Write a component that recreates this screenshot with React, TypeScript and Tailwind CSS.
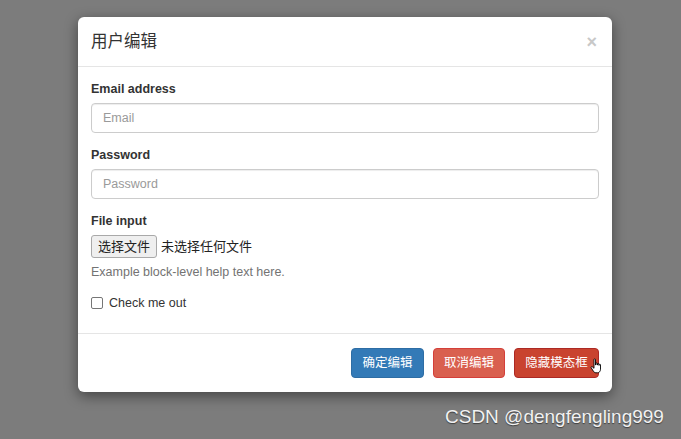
export default function App() {
  return (
    <div
      className="relative h-[439px] w-[681px] overflow-hidden bg-[#7c7c7c] pl-[78px] pt-[17px]"
      style={{ fontFamily: '"Liberation Sans", "Noto Sans CJK SC", sans-serif' }}
    >
      <div className="w-[534px] rounded-[6px] bg-white shadow-[0_4px_14px_rgba(0,0,0,0.45)]">
        {/* header */}
        <div className="flex h-[50px] items-center justify-between border-b border-[#e5e5e5] px-[13px]">
          <h4 className="text-[16.5px] text-[#333]">用户编辑</h4>
          <span className="mr-[2px] text-[18px] font-bold leading-none text-[#c8c8c8]">×</span>
        </div>

        {/* body */}
        <div className="border-b border-[#e5e5e5] px-[13px] pb-[15px] pt-[13px] text-[12.5px] text-[#333]">
          <div className="mb-[13px]">
            <label className="mb-[5px] block text-[12.5px] font-bold leading-[18px]">Email address</label>
            <input
              placeholder="Email"
              className="block h-[30px] w-full rounded-[4px] border border-[#ccc] px-[11px] text-[12.5px] placeholder:text-[#9a9a9a] shadow-[inset_0_1px_1px_rgba(0,0,0,0.075)]"
            />
          </div>
          <div className="mb-[13px]">
            <label className="mb-[5px] block text-[12.5px] font-bold leading-[18px]">Password</label>
            <input
              placeholder="Password"
              className="block h-[30px] w-full rounded-[4px] border border-[#ccc] px-[11px] text-[12.5px] placeholder:text-[#9a9a9a] shadow-[inset_0_1px_1px_rgba(0,0,0,0.075)]"
            />
          </div>
          <div className="mb-[13px]">
            <label className="mb-[5px] block text-[12.5px] font-bold leading-[18px]">File input</label>
            <div className="flex items-center gap-[4px]">
              <span className="flex h-[23px] items-center rounded-[3px] border border-[#a9a9a9] bg-[#efefef] px-[6px] text-[13px] text-[#222]">
                选择文件
              </span>
              <span className="text-[13px] text-[#222]">未选择任何文件</span>
            </div>
            <p className="mt-[5px] leading-[18px] text-[#737373]">Example block-level help text here.</p>
          </div>
          <div className="flex items-center gap-[6px] pb-[6px]">
            <span className="h-[12px] w-[12px] rounded-[2px] border border-[#767676] bg-white" />
            <span className="leading-[18px]">Check me out</span>
          </div>
        </div>

        {/* footer */}
        <div className="flex h-[58px] items-center justify-end gap-[9px] px-[13px] text-[12.5px] text-white">
          <button className="h-[30px] w-[73px] rounded-[4px] border border-[#2e6da4] bg-[#337ab7]">确定编辑</button>
          <button className="h-[30px] w-[72px] rounded-[4px] border border-[#d43f3a] bg-[#d9604f]">取消编辑</button>
          <button className="relative h-[30px] w-[85px] rounded-[4px] border border-[#ac2925] bg-[#c9432f]">
            隐藏模态框
            <svg
              className="absolute left-[75px] top-[9px]"
              width="14"
              height="16"
              viewBox="0 0 14 16"
            >
              <path
                d="M4 1.5c0-.8 1.5-.8 1.5 0V7h.3V5.5c0-.8 1.4-.8 1.4 0V7h.3V6c0-.8 1.4-.8 1.4 0v1.3h.3V6.8c0-.8 1.3-.8 1.3 0v4.4c0 2-1.2 3.6-3 3.6H6c-1.2 0-2-.7-2.7-1.700L1.2 9.8c-.5-.8.5-1.6 1.2-.9L4 10.3z"
                fill="#fff"
                stroke="#000"
                strokeWidth="0.9"
              />
            </svg>
          </button>
        </div>
      </div>

      <div className="absolute left-[445px] top-[405px] text-[19px] leading-[24px] text-[#f2f2f2] [text-shadow:0_1px_1px_rgba(0,0,0,0.5)]">
        CSDN @dengfengling999
      </div>
    </div>
  );
}
